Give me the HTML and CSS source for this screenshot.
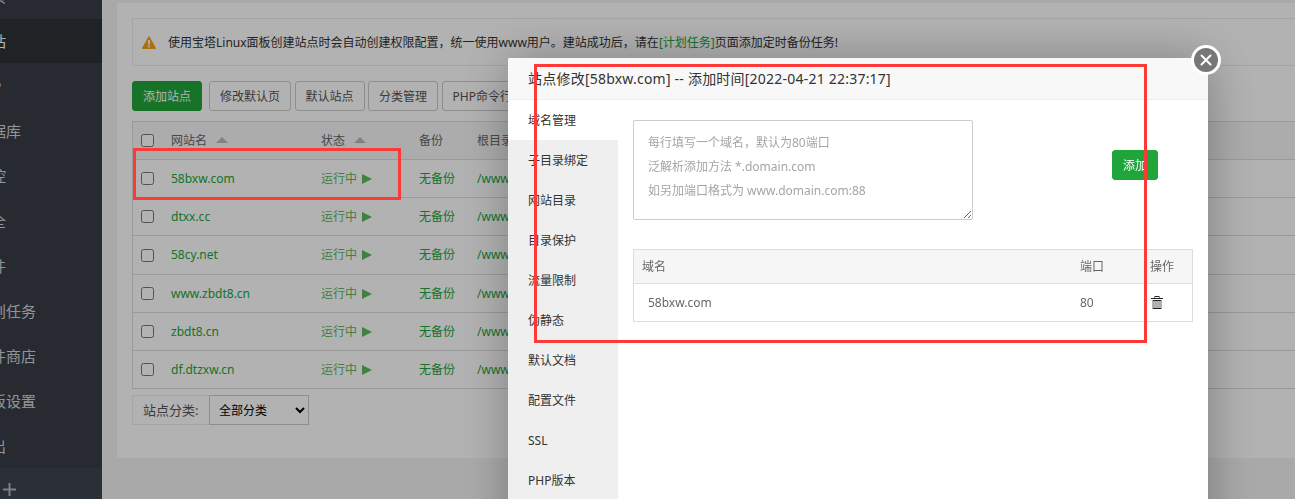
FILE: index.html
```html
<!DOCTYPE html>
<html lang="zh-CN">
<head>
    <meta charset="utf-8">
    <title>网站</title>
    <link rel="stylesheet" href="styles.css">
</head>
<body>
    <div class="page">
        <nav class="sidebar">
            <ul class="menu">
                <li>首页</li>
                <li class="current">网站</li>
                <li>FTP</li>
                <li>数据库</li>
                <li>监控</li>
                <li>安全</li>
                <li>文件</li>
                <li>计划任务</li>
                <li>软件商店</li>
                <li>面板设置</li>
                <li>退出</li>
            </ul>
            <div class="menu-add">
                <svg width="13" height="13" viewBox="0 0 13 13"><path d="M6.5 0v13M0 6.5h13" stroke="#b4b6b9" stroke-width="2"/></svg>
            </div>
        </nav>

        <main class="main">
            <section class="panel">
                <div class="notice">
                    <svg width="14" height="13" viewBox="0 0 14 13"><path d="M7 0.6L13.6 12.4H0.4z" fill="#f59f12" stroke="#f59f12" stroke-linejoin="round"/><path d="M7 4v4.4M7 9.4v1.8" stroke="#fff" stroke-width="1.8"/></svg>
                    <p>使用宝塔Linux面板创建站点时会自动创建权限配置，统一使用www用户。建站成功后，请在<a class="link">[计划任务]</a>页面添加定时备份任务!</p>
                </div>

                <div class="toolbar">
                    <button class="btn btn-success">添加站点</button>
                    <button class="btn">修改默认页</button>
                    <button class="btn">默认站点</button>
                    <button class="btn">分类管理</button>
                    <button class="btn">PHP命令行版本</button>
                </div>

                <table class="sites">
                    <colgroup><col class="c-check"><col class="c-name"><col class="c-state"><col class="c-backup"><col></colgroup>
                    <thead>
                        <tr>
                            <th><input type="checkbox"></th>
                            <th>网站名<i class="sort"></i></th>
                            <th>状态<i class="sort"></i></th>
                            <th>备份</th>
                            <th>根目录</th>
                        </tr>
                    </thead>
                    <tbody>
                        <tr><td><input type="checkbox"></td><td>58bxw.com</td><td class="run">运行中<i class="play"></i></td><td>无备份</td><td>/www</td></tr>
                        <tr><td><input type="checkbox"></td><td>dtxx.cc</td><td class="run">运行中<i class="play"></i></td><td>无备份</td><td>/www</td></tr>
                        <tr class="tall"><td><input type="checkbox"></td><td>58cy.net</td><td class="run">运行中<i class="play"></i></td><td>无备份</td><td>/www</td></tr>
                        <tr><td><input type="checkbox"></td><td>www.zbdt8.cn</td><td class="run">运行中<i class="play"></i></td><td>无备份</td><td>/www</td></tr>
                        <tr><td><input type="checkbox"></td><td>zbdt8.cn</td><td class="run">运行中<i class="play"></i></td><td>无备份</td><td>/www</td></tr>
                        <tr><td><input type="checkbox"></td><td>df.dtzxw.cn</td><td class="run">运行中<i class="play"></i></td><td>无备份</td><td>/www</td></tr>
                    </tbody>
                </table>

                <div class="filter">
                    <span class="filter-label">站点分类:</span>
                    <select class="filter-select"><option>全部分类</option></select>
                </div>
            </section>
        </main>
    </div>

    <div class="shade"></div>

    <div class="dialog">
        <h3 class="dialog-title">站点修改[58bxw.com] -- 添加时间[2022-04-21 22:37:17]</h3>
        <span class="dialog-close">
            <svg width="12" height="12" viewBox="0 0 12 12"><path d="M1.5 1.5l9 9M10.5 1.5l-9 9" stroke="#fff" stroke-width="2" stroke-linecap="round"/></svg>
        </span>
        <div class="dialog-body">
            <ul class="tabs">
                <li class="on">域名管理</li>
                <li>子目录绑定</li>
                <li>网站目录</li>
                <li>目录保护</li>
                <li>流量限制</li>
                <li>伪静态</li>
                <li>默认文档</li>
                <li>配置文件</li>
                <li>SSL</li>
                <li>PHP版本</li>
            </ul>
            <div class="content">
                <div class="add-domain">
                    <textarea class="domain-input" placeholder="每行填写一个域名，默认为80端口&#10;泛解析添加方法 *.domain.com&#10;如另加端口格式为 www.domain.com:88"></textarea>
                    <button class="btn btn-success">添加</button>
                </div>
                <table class="domains">
                    <colgroup><col><col class="c-port"><col class="c-op"></colgroup>
                    <thead>
                        <tr><th>域名</th><th>端口</th><th>操作</th></tr>
                    </thead>
                    <tbody>
                        <tr>
                            <td class="domain">58bxw.com</td>
                            <td>80</td>
                            <td>
                                <svg class="trash" width="12" height="14" viewBox="0 0 12 14"><path d="M1 4h10v9H1z" fill="#b0b0b0"/><path d="M3.5 2V.5h5V2" fill="none" stroke="#777"/><path d="M4 .5h4M0 2.5h12M2 4.5h8M2 12.5h8" stroke="#222"/></svg>
                            </td>
                        </tr>
                    </tbody>
                </table>
            </div>
        </div>
    </div>

    <div class="mark mark-row"></div>
    <div class="mark mark-dialog"></div>
</body>
</html>
```

FILE: styles.css
```css
* { box-sizing: border-box }

body {
    margin: 0;
    height: 499px;
    overflow: hidden;
    background-color: #f3f3f3;
    color: #555;
    font: 12px/18px "Noto Sans", "Noto Sans CJK SC", sans-serif;
}

ul, p, h3 {
    margin: 0;
    padding: 0;
    list-style: none;
    font-weight: normal;
}

button, select, textarea, input { font-family: inherit }

.page {
    display: flex;
    height: 499px;
    overflow: hidden;
}

/* left menu, scrolled partly out of view */
.sidebar {
    width: 102px;
    flex: none;
    overflow: hidden;
    background-color: #383d47;
}

.menu { margin-top: -26px }

.menu li {
    height: 44px;
    margin-bottom: 1px;
    line-height: 44px;
    font-size: 15px;
    text-indent: -24px;
    white-space: nowrap;
    color: #d3d5d8;
}

.menu .current {
    background-color: #2f3337;
    color: #fff;
}

.menu-add {
    height: 40px;
    margin-top: -1px;
    padding: 15px 3px;
    background-color: #3e444f;
}

.menu-add svg { display: block }

.main {
    flex: 1;
    padding: 3px 0 0 15px;
    overflow: hidden;
}

.panel {
    width: 1300px;
    height: 455px;
    padding: 15px;
    background-color: #fff;
}

.notice {
    display: flex;
    align-items: center;
    gap: 12px;
    height: 48px;
    padding-left: 9px;
    border: 1px solid #ececec;
    color: #333;
}

.notice p { padding-top: 2px }

.link { color: #20a53a }

.toolbar {
    display: flex;
    gap: 3.5px;
    margin: 15px 0 10px;
}

.btn {
    height: 30px;
    padding: 2px 10px 0;
    border: 1px solid #ccc;
    border-radius: 3px;
    background-color: #fff;
    color: #555;
    font-size: 12px;
    line-height: 26px;
    white-space: nowrap;
}

.btn-success {
    border-color: #20a53a;
    background-color: #20a53a;
    color: #fff;
}

.toolbar .btn-success { margin-right: 3.5px }

table {
    border-collapse: collapse;
    table-layout: fixed;
    width: 100%;
}

th, td {
    padding: 0 8px;
    text-align: left;
    font-weight: normal;
    white-space: nowrap;
}

.sites {
    border-collapse: separate;
    border-spacing: 0;
    border: 1px solid #ddd;
    border-bottom: 0;
}

.sites th, .sites td {
    height: 38px;
    border-bottom: 1px solid #ddd;
}

.sites th {
    background-color: #f6f6f6;
    color: #666;
}

.sites td { color: #20a53a }
.sites .tall td { height: 39px }
.sites .run { color: #5cb85c }

.sites input {
    display: block;
    width: 13px;
    height: 13px;
    margin: 0;
}

.c-check { width: 30px }
.c-name { width: 150px }
.c-state { width: 98px }
.c-backup { width: 58px }

.sort {
    display: inline-block;
    margin-left: 9px;
    vertical-align: 2px;
    border: 6px solid transparent;
    border-top: 0;
    border-bottom-color: #bbb;
}

.play {
    display: inline-block;
    margin-left: 5px;
    vertical-align: -1px;
    border: 5.5px solid transparent;
    border-right: 0;
    border-left: 10px solid #5cb85c;
}

.filter {
    display: flex;
    margin-top: 6px;
}

.filter-label {
    width: 77px;
    height: 30px;
    padding-left: 10px;
    border: 1px solid #ececec;
    border-right: 0;
    font-size: 13px;
    line-height: 28px;
}

.filter-select {
    width: 100px;
    height: 30px;
    padding-left: 5px;
    border: 1px solid #ccc;
    border-radius: 0;
    background-color: #fff;
    color: #000;
    font-size: 12px;
}

.shade {
    position: fixed;
    inset: 0;
    background-color: rgba(0, 0, 0, .3);
}

.dialog {
    position: fixed;
    top: 58px;
    left: 508px;
    width: 700px;
    height: 520px;
    border-radius: 2px;
    background-color: #fff;
    box-shadow: 1px 1px 50px rgba(0, 0, 0, .3);
}

.dialog-title {
    height: 42px;
    padding-left: 20px;
    border-bottom: 1px solid #eee;
    border-radius: 2px 2px 0 0;
    background-color: #f8f8f8;
    color: #333;
    font-size: 14px;
    line-height: 42px;
    letter-spacing: .22px;
}

.dialog-close {
    position: absolute;
    top: -13px;
    right: -13px;
    display: flex;
    align-items: center;
    justify-content: center;
    width: 30px;
    height: 30px;
    border: 3px solid #fff;
    border-radius: 50%;
    background-color: #777;
}

.dialog-body {
    display: flex;
    height: 478px;
}

.tabs {
    width: 110px;
    background-color: #efefef;
}

.tabs li {
    height: 40px;
    padding: 1px 0 0 20px;
    line-height: 40px;
    color: #333;
}

.tabs .on { background-color: #fff }

.content {
    flex: 1;
    padding: 20px 15px;
}

.add-domain {
    display: flex;
    align-items: flex-start;
    justify-content: space-between;
    padding-right: 35px;
    margin-bottom: 29px;
}

.add-domain .btn { margin-top: 30px }

.domain-input {
    width: 340px;
    height: 100px;
    padding: 10px 14px;
    border: 1px solid #ccc;
    border-radius: 2px;
    font-size: 12px;
    line-height: 24px;
}

.domain-input::placeholder { color: #a5a5a5 }

.domains {
    border-collapse: separate;
    border-spacing: 0;
    border: 1px solid #ddd;
    color: #666;
}

.domains th {
    height: 34px;
    border-bottom: 1px solid #ddd;
    background-color: #f6f6f6;
}

.domains td { height: 37px }
.domains .domain { padding-left: 14px }
.c-port { width: 70px }
.c-op { width: 50px }

.trash {
    display: block;
    margin-left: 1px;
}

/* red highlight frames */
.mark {
    position: absolute;
    border: 3px solid #fe3a38;
}

.mark-row {
    top: 148px;
    left: 133px;
    width: 268px;
    height: 52px;
}

.mark-dialog {
    top: 64px;
    left: 534px;
    width: 613px;
    height: 279px;
}
```
